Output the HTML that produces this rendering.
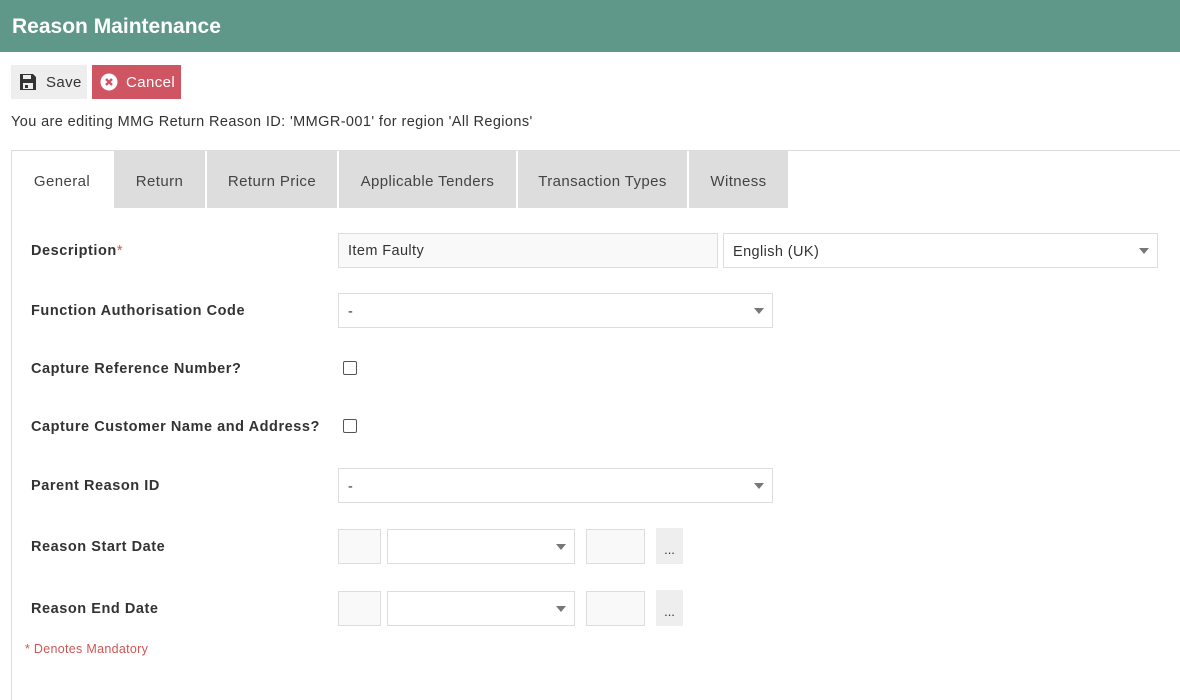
<!DOCTYPE html>
<html><head><style>
*{box-sizing:border-box;margin:0;padding:0}
html,body{width:1180px;height:700px;overflow:hidden}
body{background:#fff;font-family:"Liberation Sans",sans-serif;font-size:14.5px;color:#333;position:relative;letter-spacing:0.4px}
.a{position:absolute}
.hdr{left:0;top:0;width:1180px;height:52px;background:#5f9888;color:#fff;font-size:21px;font-weight:bold;padding:15px 12px;letter-spacing:0}
.btn{top:65px;height:34px;font-size:15px;display:flex;align-items:center}
.tab{top:151px;height:57px;background:#ddd;display:flex;align-items:center;justify-content:center;font-size:15px;color:#444;padding-top:3px}
.lbl{left:31px;font-weight:bold;font-size:14.5px;color:#333;letter-spacing:0.55px}
.in{border:1px solid #ddd;background:#f9f9f9;height:35px;font-size:14.5px;padding:9px 9px}
.sel{border:1px solid #ddd;background:#fff;height:35px;font-size:14.5px;padding:10px 9px}
.sel:after{content:"";position:absolute;right:8px;top:14px;border-left:5px solid transparent;border-right:5px solid transparent;border-top:6px solid #777}
.cb{width:14px;height:14px;border:1px solid #555;border-radius:2px;background:#fff}
.dots{background:#eee;width:27px;height:36px;font-size:13px;text-align:center;padding-top:14px;letter-spacing:0}
</style></head><body>
<div class="a hdr">Reason Maintenance</div>
<div class="a btn" style="left:11px;width:76px;background:#eee;color:#333;padding-left:8px">
<svg width="18" height="18" viewBox="0 0 18 18"><path d="M1 1h13l3 3v13H1z" fill="#333"/><rect x="4" y="2" width="8" height="4" fill="#eee"/><rect x="4" y="10" width="10" height="6" fill="#eee"/><rect x="6" y="12" width="3" height="3" fill="#333"/></svg>
<span style="margin-left:9px">Save</span></div>
<div class="a btn" style="left:92px;width:89px;background:#d05562;color:#fff;padding-left:8px">
<svg width="18" height="18" viewBox="0 0 18 18"><circle cx="9" cy="9" r="8.5" fill="#fff"/><path d="M6 6l6 6M12 6l-6 6" stroke="#d05562" stroke-width="2.4"/></svg>
<span style="margin-left:8px">Cancel</span></div>
<div class="a" style="left:11px;top:114px;font-size:14.5px">You are editing MMG Return Reason ID: 'MMGR-001' for region 'All Regions'</div>
<div class="a" style="left:11px;top:150px;width:1169px;height:550px;border:1px solid #ddd;border-bottom:none;border-right:none"></div>
<div class="a tab" style="left:12px;width:100px;background:#fff">General</div>
<div class="a tab" style="left:114px;width:91px">Return</div>
<div class="a tab" style="left:207px;width:130px">Return Price</div>
<div class="a tab" style="left:339px;width:177px">Applicable Tenders</div>
<div class="a tab" style="left:518px;width:169px">Transaction Types</div>
<div class="a tab" style="left:689px;width:99px">Witness</div>

<div class="a lbl" style="top:243px">Description<span style="color:#d05555;font-weight:normal">*</span></div>
<div class="a in" style="left:338px;top:233px;width:380px">Item Faulty</div>
<div class="a sel" style="left:723px;top:233px;width:435px">English (UK)</div>

<div class="a lbl" style="top:303px">Function Authorisation Code</div>
<div class="a sel" style="left:338px;top:293px;width:435px">-</div>

<div class="a lbl" style="top:361px">Capture Reference Number?</div>
<div class="a cb" style="left:343px;top:361px"></div>
<div class="a lbl" style="top:419px">Capture Customer Name and Address?</div>
<div class="a cb" style="left:343px;top:419px"></div>

<div class="a lbl" style="top:478px">Parent Reason ID</div>
<div class="a sel" style="left:338px;top:468px;width:435px">-</div>

<div class="a lbl" style="top:539px">Reason Start Date</div>
<div class="a in" style="left:338px;top:529px;width:43px"></div>
<div class="a sel" style="left:387px;top:529px;width:188px"></div>
<div class="a in" style="left:586px;top:529px;width:59px"></div>
<div class="a dots" style="left:656px;top:528px">...</div>

<div class="a lbl" style="top:601px">Reason End Date</div>
<div class="a in" style="left:338px;top:591px;width:43px"></div>
<div class="a sel" style="left:387px;top:591px;width:188px"></div>
<div class="a in" style="left:586px;top:591px;width:59px"></div>
<div class="a dots" style="left:656px;top:590px">...</div>

<div class="a" style="left:25px;top:642px;font-size:12.5px;color:#d05555;letter-spacing:0.3px">* Denotes Mandatory</div>
</body></html>
